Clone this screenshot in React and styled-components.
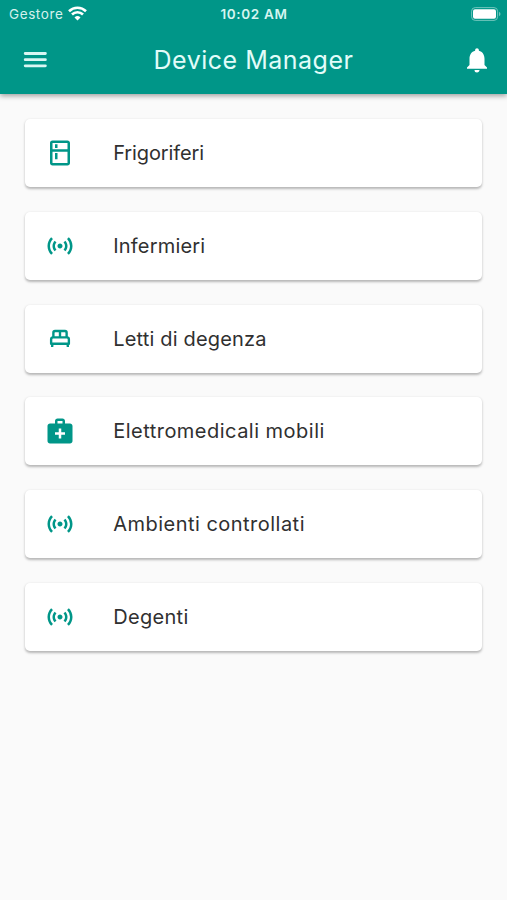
import React from "react"
import styled, { createGlobalStyle } from "styled-components"
import { MdNotifications, MdOutlineKitchen, MdSensors, MdMedicalServices } from "react-icons/md"

const GlobalStyle = createGlobalStyle`
    body{
        margin: 0;
        background: #FAFAFA;
        font-family: Inter, "Liberation Sans", sans-serif;
    }
`

const Screen = styled.div`
    min-height: 900px;
    background: #FAFAFA;
`

const Header = styled.header`
    height: 94px;
    background: #009688;
    color: #FFFFFF;
    box-shadow: 0 2px 5px rgba(0, 0, 0, 0.36);
`

const StatusBar = styled.div`
    display: grid;
    grid-template-columns: 1fr auto 1fr;
    align-items: center;
    height: 27px;
    padding: 0 6px 0 9px;
    font-size: 13.5px;
`

const Carrier = styled.div`
    display: flex;
    align-items: center;
    gap: 5px;
    letter-spacing: 0.6px;
    color: #D5F1ED;
`

const Clock = styled.div`
    margin-left: -2px;
    font-size: 13.5px;
    font-weight: 600;
    letter-spacing: 0.65px;
    color: #D5F5F0;
`

const BatteryBox = styled.div`
    display: flex;
    justify-content: flex-end;
`

const Toolbar = styled.div`
    display: grid;
    grid-template-columns: 1fr auto 1fr;
    align-items: center;
    height: 66px;
    padding: 0 15px 0 15px;
`

const IconButton = styled.button`
    display: flex;
    justify-self: ${props => props.$end ? "end" : "start"};
    margin-left: ${props => props.$end ? 0 : "5px"};
    padding: 0;
    border: 0;
    background: none;
    color: ${props => props.$end ? "#FFFFFF" : "#D9F7F3"};
    font-size: 30px;
`

const Title = styled.h1`
    margin: 0;
    font-size: 25px;
    font-weight: 400;
    line-height: 36px;
    letter-spacing: 0.5px;
    color: #E2FCF9;
`

const DeviceList = styled.main`
    display: flex;
    flex-direction: column;
    gap: 24.8px;
    padding: 25px 25px 0;
`

const Card = styled.div`
    display: flex;
    align-items: center;
    height: 68px;
    padding-left: 19.5px;
    border-radius: 5px;
    background: #FFFFFF;
    box-shadow: 0 1.5px 2.5px rgba(0, 0, 0, 0.27);
    color: #009688;
    font-size: 30px;
`

const Label = styled.span`
    margin-left: 38.7px;
    font-size: 20px;
    line-height: 30px;
    letter-spacing: ${props => props.$spacing}px;
    white-space: nowrap;
    color: #303030;
`

const MenuIcon = () => (
    <svg width="30" height="30" viewBox="0 0 30 30" fill="none" stroke="currentColor" strokeWidth="2.8" strokeLinecap="round">
        <path d="M5.2 8.5h20.2M5.2 14.7h20.2M5.2 20.8h20.2" />
    </svg>
)

const WifiIcon = () => (
    <svg width="19" height="15" viewBox="0 0 19 15" fill="none" stroke="#FFFFFF" strokeWidth="2.6">
        <path d="M1 5.2a12.2 12.2 0 0 1 17 0" />
        <path d="M4 8.5a7.8 7.8 0 0 1 11 0" />
        <path d="M9.5 14.6l-3-3.2a4.3 4.3 0 0 1 6 0z" fill="#FFFFFF" stroke="none" />
    </svg>
)

const BatteryIcon = () => (
    <svg width="30" height="14" viewBox="0 0 30 14">
        <rect x="0.6" y="0.6" width="26" height="12.8" rx="3.6" fill="none" stroke="#70C5BC" strokeWidth="1" />
        <rect x="2" y="2.2" width="23" height="9.6" rx="2" fill="#FFFFFF" />
        <path d="M28 4.8v4.4c2-.8 2-3.6 0-4.4z" fill="#70C5BC" />
    </svg>
)

const BedIcon = () => (
    <svg width="30" height="30" viewBox="0 0 24 24" fill="none" stroke="currentColor" strokeWidth="1.9" strokeLinejoin="round">
        <path d="M6.7 10.6V6.9c0-.8.5-1.3 1.3-1.3h8c.8 0 1.3.5 1.3 1.3v3.7M12 5.6v5" />
        <path d="M6.5 10.7h11c1 0 1.6.7 1.6 1.6v3.5H4.9v-3.5c0-.9.6-1.6 1.6-1.6zM5.9 15.8l-.2 2.6M18.1 15.8l.2 2.6" />
    </svg>
)

const devices = [
    { name: "Frigoriferi", icon: <MdOutlineKitchen />, spacing: -0.12 },
    { name: "Infermieri", icon: <MdSensors />, spacing: 0.2 },
    { name: "Letti di degenza", icon: <BedIcon />, spacing: 0.18 },
    { name: "Elettromedicali mobili", icon: <MdMedicalServices />, spacing: 0.48 },
    { name: "Ambienti controllati", icon: <MdSensors />, spacing: 0.48 },
    { name: "Degenti", icon: <MdSensors />, spacing: 0.32 },
]

const App = () => {
    return (
        <Screen>
            <GlobalStyle />
            <Header>
                <StatusBar>
                    <Carrier>Gestore <WifiIcon /></Carrier>
                    <Clock>10:02 AM</Clock>
                    <BatteryBox><BatteryIcon /></BatteryBox>
                </StatusBar>
                <Toolbar>
                    <IconButton aria-label="Menu"><MenuIcon /></IconButton>
                    <Title>Device Manager</Title>
                    <IconButton $end aria-label="Notifiche"><MdNotifications /></IconButton>
                </Toolbar>
            </Header>
            <DeviceList>
                {
                    devices.map(device => (
                        <Card key={device.name}>
                            {device.icon}
                            <Label $spacing={device.spacing}>{device.name}</Label>
                        </Card>
                    ))
                }
            </DeviceList>
        </Screen>
    )
}

export default App
